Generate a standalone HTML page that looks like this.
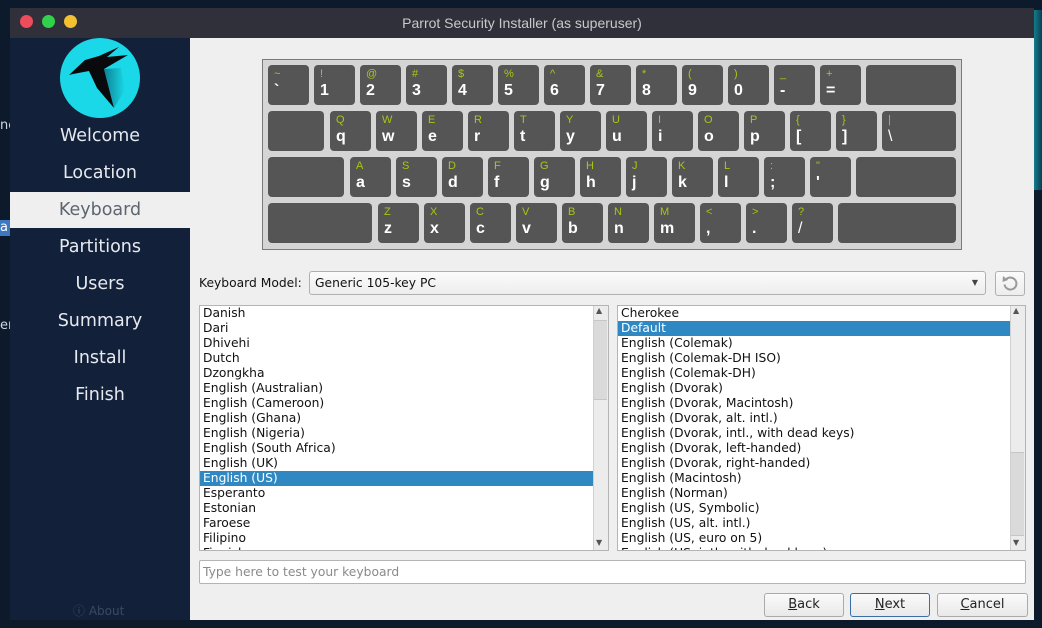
<!DOCTYPE html>
<html><head><meta charset="utf-8"><style>
*{margin:0;padding:0;box-sizing:border-box}
body{width:1042px;height:628px;overflow:hidden;background:#0c1a2c;font-family:"DejaVu Sans","Liberation Sans",sans-serif;position:relative}
.abs{position:absolute}
#win{left:10px;top:8px;width:1024px;height:612px;background:#efefef}
#title{left:10px;top:8px;width:1024px;height:30px;background:#2f3039;color:#c9c9cc;font-family:"Liberation Sans",sans-serif;font-size:14px;text-align:center;line-height:31px}
.dot{width:13px;height:13px;border-radius:50%;top:15px}
#side{left:10px;top:38px;width:180px;height:582px;background:#13203a}
.nav{left:10px;width:180px;text-align:center;color:#e6eaef;font-size:17.5px;height:36px;line-height:38px}
#kb{left:262px;top:59px;width:700px;height:191px;background:#d5d5d5;border:1px solid #7a7a7a}
.k{position:absolute;height:40px;background:#555;border-radius:4px;font-family:"Liberation Sans",sans-serif}
.k .u{position:absolute;left:6px;top:3px;font-size:11px;color:#a9c614}
.k .l{position:absolute;left:6px;top:17px;font-size:16px;font-weight:bold;color:#fff}
.list{background:#fff;border:1px solid #b4b4b4;font-size:12.3px;color:#111;overflow:hidden}
.list div{height:15px;line-height:15px;padding-left:3px;white-space:nowrap}
.sel{background:#3088c3;color:#fff}
.sb{background:#ececec;border-left:1px solid #d0d0d0}
.btn{top:592px;height:24px;background:linear-gradient(#fafafa,#e9e9e9);border:1px solid #aaa;border-radius:3px;font-size:13px;text-align:center;line-height:22px;color:#222}
</style></head><body>
<div class="abs" style="left:1034px;top:10px;width:8px;height:180px;background:linear-gradient(90deg,#17a7b8,#0b4d60);opacity:.7"></div>
<div class="abs" style="left:0;top:220px;width:10px;height:16px;background:#3e78c0;color:#fff;font-size:13px;line-height:16px">a</div>
<div class="abs" style="left:0;top:118px;color:#cfd6df;font-size:13px">ne</div>
<div class="abs" style="left:0;top:318px;color:#cfd6df;font-size:13px">en</div>
<div id="win" class="abs"></div>
<div id="title" class="abs">Parrot Security Installer (as superuser)</div>
<div class="abs dot" style="left:20px;background:#ee4b5b"></div>
<div class="abs dot" style="left:42px;background:#2fd24a"></div>
<div class="abs dot" style="left:64px;background:#f5c030"></div>
<div id="side" class="abs"></div>
<svg class="abs" style="left:59px;top:38px" width="82" height="82" viewBox="0 0 82 82">
<defs><linearGradient id="g" x1="0" y1="0" x2="1" y2="0"><stop offset="0" stop-color="#0a6d80"/><stop offset="1" stop-color="#1ad8e6"/></linearGradient></defs>
<circle cx="41" cy="40" r="40" fill="#1ad8e8"/>
<path d="M10 37 L26 22 L40 18 L60 9 L48 19 L69 17 L45 31 L55 70 L38 50 L30 33 L14 36 Z" fill="#0a0a0c"/>
<path d="M45 31 L55 70 L66 52 L62 30 Z" fill="url(#g)" opacity=".8"/>
</svg>
<div class="abs nav" style="top:117px">Welcome</div>
<div class="abs nav" style="top:154px">Location</div>
<div class="abs nav" style="top:192px;background:#efefef;color:#5d6670;line-height:36px">Keyboard</div>
<div class="abs nav" style="top:228px">Partitions</div>
<div class="abs nav" style="top:265px">Users</div>
<div class="abs nav" style="top:302px">Summary</div>
<div class="abs nav" style="top:339px">Install</div>
<div class="abs nav" style="top:376px">Finish</div>
<div class="abs" style="left:73px;top:602px;color:#3a4a60;font-size:12px">ⓘ About</div>

<div id="kb" class="abs"></div>
<div class="abs" style="left:0;top:0">
<div class="k" style="left:268px;top:65px;width:41px"><span class="u">~</span><span class="l">`</span></div>
<div class="k" style="left:314px;top:65px;width:41px"><span class="u">!</span><span class="l">1</span></div>
<div class="k" style="left:360px;top:65px;width:41px"><span class="u">@</span><span class="l">2</span></div>
<div class="k" style="left:406px;top:65px;width:41px"><span class="u">#</span><span class="l">3</span></div>
<div class="k" style="left:452px;top:65px;width:41px"><span class="u">$</span><span class="l">4</span></div>
<div class="k" style="left:498px;top:65px;width:41px"><span class="u">%</span><span class="l">5</span></div>
<div class="k" style="left:544px;top:65px;width:41px"><span class="u">^</span><span class="l">6</span></div>
<div class="k" style="left:590px;top:65px;width:41px"><span class="u">&amp;</span><span class="l">7</span></div>
<div class="k" style="left:636px;top:65px;width:41px"><span class="u">*</span><span class="l">8</span></div>
<div class="k" style="left:682px;top:65px;width:41px"><span class="u">(</span><span class="l">9</span></div>
<div class="k" style="left:728px;top:65px;width:41px"><span class="u">)</span><span class="l">0</span></div>
<div class="k" style="left:774px;top:65px;width:41px"><span class="u">_</span><span class="l">-</span></div>
<div class="k" style="left:820px;top:65px;width:41px"><span class="u">+</span><span class="l">=</span></div>
<div class="k" style="left:866px;top:65px;width:90px"></div>
<div class="k" style="left:268px;top:111px;width:56px"></div>
<div class="k" style="left:330px;top:111px;width:41px"><span class="u">Q</span><span class="l">q</span></div>
<div class="k" style="left:376px;top:111px;width:41px"><span class="u">W</span><span class="l">w</span></div>
<div class="k" style="left:422px;top:111px;width:41px"><span class="u">E</span><span class="l">e</span></div>
<div class="k" style="left:468px;top:111px;width:41px"><span class="u">R</span><span class="l">r</span></div>
<div class="k" style="left:514px;top:111px;width:41px"><span class="u">T</span><span class="l">t</span></div>
<div class="k" style="left:560px;top:111px;width:41px"><span class="u">Y</span><span class="l">y</span></div>
<div class="k" style="left:606px;top:111px;width:41px"><span class="u">U</span><span class="l">u</span></div>
<div class="k" style="left:652px;top:111px;width:41px"><span class="u">I</span><span class="l">i</span></div>
<div class="k" style="left:698px;top:111px;width:41px"><span class="u">O</span><span class="l">o</span></div>
<div class="k" style="left:744px;top:111px;width:41px"><span class="u">P</span><span class="l">p</span></div>
<div class="k" style="left:790px;top:111px;width:41px"><span class="u">{</span><span class="l">[</span></div>
<div class="k" style="left:836px;top:111px;width:41px"><span class="u">}</span><span class="l">]</span></div>
<div class="k" style="left:882px;top:111px;width:74px"><span class="u">|</span><span class="l" style="font-weight:normal">\</span></div>
<div class="k" style="left:268px;top:157px;width:76px"></div>
<div class="k" style="left:350px;top:157px;width:41px"><span class="u">A</span><span class="l">a</span></div>
<div class="k" style="left:396px;top:157px;width:41px"><span class="u">S</span><span class="l">s</span></div>
<div class="k" style="left:442px;top:157px;width:41px"><span class="u">D</span><span class="l">d</span></div>
<div class="k" style="left:488px;top:157px;width:41px"><span class="u">F</span><span class="l">f</span></div>
<div class="k" style="left:534px;top:157px;width:41px"><span class="u">G</span><span class="l">g</span></div>
<div class="k" style="left:580px;top:157px;width:41px"><span class="u">H</span><span class="l">h</span></div>
<div class="k" style="left:626px;top:157px;width:41px"><span class="u">J</span><span class="l">j</span></div>
<div class="k" style="left:672px;top:157px;width:41px"><span class="u">K</span><span class="l">k</span></div>
<div class="k" style="left:718px;top:157px;width:41px"><span class="u">L</span><span class="l">l</span></div>
<div class="k" style="left:764px;top:157px;width:41px"><span class="u">:</span><span class="l">;</span></div>
<div class="k" style="left:810px;top:157px;width:41px"><span class="u">"</span><span class="l">'</span></div>
<div class="k" style="left:856px;top:157px;width:100px"></div>
<div class="k" style="left:268px;top:203px;width:104px"></div>
<div class="k" style="left:378px;top:203px;width:41px"><span class="u">Z</span><span class="l">z</span></div>
<div class="k" style="left:424px;top:203px;width:41px"><span class="u">X</span><span class="l">x</span></div>
<div class="k" style="left:470px;top:203px;width:41px"><span class="u">C</span><span class="l">c</span></div>
<div class="k" style="left:516px;top:203px;width:41px"><span class="u">V</span><span class="l">v</span></div>
<div class="k" style="left:562px;top:203px;width:41px"><span class="u">B</span><span class="l">b</span></div>
<div class="k" style="left:608px;top:203px;width:41px"><span class="u">N</span><span class="l">n</span></div>
<div class="k" style="left:654px;top:203px;width:41px"><span class="u">M</span><span class="l">m</span></div>
<div class="k" style="left:700px;top:203px;width:41px"><span class="u">&lt;</span><span class="l">,</span></div>
<div class="k" style="left:746px;top:203px;width:41px"><span class="u">&gt;</span><span class="l">.</span></div>
<div class="k" style="left:792px;top:203px;width:41px"><span class="u">?</span><span class="l" style="font-weight:normal">/</span></div>
<div class="k" style="left:838px;top:203px;width:118px"></div>
</div>

<div class="abs" style="left:199px;top:276px;font-size:12.3px;color:#111">Keyboard Model:</div>
<div class="abs" style="left:309px;top:271px;width:677px;height:24px;background:linear-gradient(#fbfbfb,#ededed);border:1px solid #b0b0b0;border-radius:3px;font-size:12.3px;line-height:22px;padding-left:5px;color:#111">Generic 105-key PC<span style="position:absolute;right:7px;top:0;font-size:8px;color:#444">▼</span></div>
<div class="abs" style="left:995px;top:271px;width:30px;height:25px;background:linear-gradient(#fbfbfb,#ededed);border:1px solid #b0b0b0;border-radius:3px">
<svg width="28" height="23" viewBox="0 0 28 23"><path d="M10 7.5 A6 6 0 1 1 8.5 12.5" fill="none" stroke="#9a9a9a" stroke-width="2"/><path d="M7 4 L12 8 L6.5 10 Z" fill="#9a9a9a"/></svg></div>

<div class="abs list" style="left:199px;top:305px;width:410px;height:246px">
<div>Danish</div><div>Dari</div><div>Dhivehi</div><div>Dutch</div><div>Dzongkha</div><div>English (Australian)</div><div>English (Cameroon)</div><div>English (Ghana)</div><div>English (Nigeria)</div><div>English (South Africa)</div><div>English (UK)</div><div class="sel" style="margin-right:15px">English (US)</div><div>Esperanto</div><div>Estonian</div><div>Faroese</div><div>Filipino</div><div>Finnish</div>
</div>
<div class="abs sb" style="left:593px;top:306px;width:15px;height:244px"></div>
<div class="abs" style="left:594px;top:320px;width:13px;height:80px;background:#dadada;border-top:1px solid #c6c6c6;border-bottom:1px solid #c6c6c6"></div>
<div class="abs" style="left:596px;top:306px;font-size:8px;color:#555">▲</div>
<div class="abs" style="left:596px;top:538px;font-size:8px;color:#555">▼</div>

<div class="abs list" style="left:617px;top:305px;width:409px;height:246px">
<div>Cherokee</div><div class="sel" style="margin-right:15px">Default</div><div>English (Colemak)</div><div>English (Colemak-DH ISO)</div><div>English (Colemak-DH)</div><div>English (Dvorak)</div><div>English (Dvorak, Macintosh)</div><div>English (Dvorak, alt. intl.)</div><div>English (Dvorak, intl., with dead keys)</div><div>English (Dvorak, left-handed)</div><div>English (Dvorak, right-handed)</div><div>English (Macintosh)</div><div>English (Norman)</div><div>English (US, Symbolic)</div><div>English (US, alt. intl.)</div><div>English (US, euro on 5)</div><div>English (US, intl., with dead keys)</div>
</div>
<div class="abs sb" style="left:1010px;top:306px;width:15px;height:244px"></div>
<div class="abs" style="left:1011px;top:452px;width:13px;height:84px;background:#dadada;border-top:1px solid #c6c6c6;border-bottom:1px solid #c6c6c6"></div>
<div class="abs" style="left:1013px;top:306px;font-size:8px;color:#555">▲</div>
<div class="abs" style="left:1013px;top:538px;font-size:8px;color:#555">▼</div>

<div class="abs" style="left:199px;top:560px;width:827px;height:24px;background:#fff;border:1px solid #b4b4b4;border-radius:2px;font-size:12.3px;color:#8a8a8a;line-height:22px;padding-left:3px">Type here to test your keyboard</div>

<div class="abs btn" style="left:764px;width:80px;top:593px"><u>B</u>ack</div>
<div class="abs btn" style="left:850px;width:80px;top:593px;border-color:#3a6ea5"><u>N</u>ext</div>
<div class="abs btn" style="left:937px;width:91px;top:593px"><u>C</u>ancel</div>
</body></html>
